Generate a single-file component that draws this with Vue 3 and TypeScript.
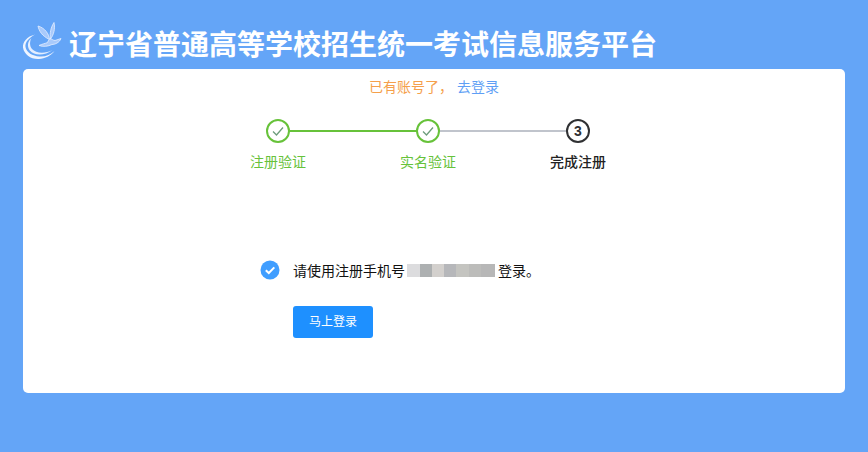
<template>
  <div class="page">
    <header class="header">
      <svg class="logo" width="42" height="40" viewBox="0 0 42 40" fill="none">
        <path d="M14 13.500 C6 15.500 1.500 21 2 26.500 C3 33.500 10 38.500 18 38 C24 37.500 30 35 33.500 30 C29.500 33.500 24.500 36 18.500 35.500 C11.500 35 5.500 31.500 4.500 26 C3.800 21 8 17 14 13.500 Z" fill="#eef4ff" />
        <path d="M10.500 17 C6.500 20.500 5.800 25.500 8.800 29.500 C13 34.500 23 35.500 31.500 29 C24 33 15 32.500 11 28 C8.500 25 8.500 20.500 10.500 17 Z" fill="#e4eeff" />
        <path d="M17 5 C18 10 21 15 28.500 18.500 C28 13 24 7 17 5 Z" fill="#a9cafb" stroke="#e6efff" stroke-width="0.8" />
        <path d="M33 1.500 C30 6 28.500 12 29.500 18 C32.500 14 34.500 8 33 1.500 Z" fill="#a9cafb" stroke="#e6efff" stroke-width="0.8" />
        <path d="M28.500 18 C31 17.500 32 19.500 34 19.500 L40 17.500 C38.500 21.500 34 23.500 31 23.500 C27 25.500 22 26 18 24.500 C21 23 24.500 22.500 26.500 21.500 C27 20.500 27.500 19 28.500 18 Z" fill="#a9cafb" stroke="#e6efff" stroke-width="0.8" />
      </svg>
      <h1 class="title">辽宁省普通高等学校招生统一考试信息服务平台</h1>
    </header>

    <main class="card">
      <div class="loginTip">
        <span class="tipOrange">已有账号了，</span>
        <a class="tipLink">去登录</a>
      </div>

      <div class="steps">
        <div v-for="(s, i) in steps" :key="s.label" class="step" :class="s.state">
          <div v-if="i < steps.length - 1" class="line" :class="{ lineDone: s.lineDone }" />
          <div class="circle">
            <svg v-if="s.state === 'done'" width="14" height="14" viewBox="0 0 14 14" fill="none">
              <path d="M2 7.500 L5.500 11 L12 3.500" stroke="#6d9c7c" stroke-width="1.300" />
            </svg>
            <span v-else>{{ i + 1 }}</span>
          </div>
          <div class="stepLabel">{{ s.label }}</div>
        </div>
      </div>

      <div class="result">
        <div class="resultRow">
          <svg class="okIcon" width="20" height="20" viewBox="0 0 20 20">
            <circle cx="10" cy="10" r="9.500" fill="#409eff" />
            <path d="M5.800 10.200 L8.800 13 L14.300 7.400" fill="none" stroke="#fff" stroke-width="2" />
          </svg>
          <span class="resultText">请使用注册手机号</span>
          <span class="blur">
            <i v-for="(b, i) in blurBlocks" :key="i" :style="{ width: b.w + 'px', background: b.c }" />
          </span>
          <span class="resultText">登录。</span>
        </div>
        <button class="btn">马上登录</button>
      </div>
    </main>
  </div>
</template>

<script setup lang="ts">
const steps = [
  { label: '注册验证', state: 'done', lineDone: true },
  { label: '实名验证', state: 'done', lineDone: false },
  { label: '完成注册', state: 'current', lineDone: false }
]

// 打码的手机号
const blurBlocks = [
  { w: 13, c: '#dcdcde' },
  { w: 12, c: '#adb0b1' },
  { w: 12, c: '#d3d0cd' },
  { w: 12, c: '#b6b7ba' },
  { w: 13, c: '#c4c4c0' },
  { w: 12, c: '#bcbcba' },
  { w: 14, c: '#b7b7b7' }
]
</script>

<style>
html,
body {
  margin: 0;
  background: #64a5f7;
}
</style>

<style scoped>
.page {
  width: 868px;
  height: 452px;
  overflow: hidden;
  background: #64a5f7;
  font-family: "Noto Sans CJK SC", "Liberation Sans", sans-serif;
}

.header {
  height: 69px;
  box-sizing: border-box;
  padding: 21px 0 0 21px;
  display: flex;
  align-items: flex-start;
}

.logo {
  flex: none;
}

.title {
  margin: 2px 0 0 6px;
  font-size: 28px;
  line-height: 40px;
  font-weight: 700;
  color: #fff;
  white-space: nowrap;
}

.card {
  width: 822px;
  height: 324px;
  margin-left: 23px;
  background: #fff;
  border-radius: 5px;
  overflow: hidden;
}

.loginTip {
  height: 36px;
  padding-top: 7px;
  box-sizing: border-box;
  text-align: center;
  font-size: 14px;
  line-height: 20px;
}

.tipOrange {
  color: #f5a04b;
}

.tipLink {
  color: #5f9ff5;
  margin-left: 4px;
}

.steps {
  display: flex;
  width: 450px;
  margin: 14px 0 0 180px;
}

.step {
  position: relative;
  width: 150px;
  display: flex;
  flex-direction: column;
  align-items: center;
}

.line {
  position: absolute;
  left: 75px;
  top: 11px;
  width: 150px;
  height: 2px;
  background: #c0c4cc;
}

.lineDone {
  background: #67c23a;
}

.circle {
  position: relative;
  width: 24px;
  height: 24px;
  box-sizing: border-box;
  border: 2px solid #303133;
  border-radius: 50%;
  background: #fff;
  display: flex;
  align-items: center;
  justify-content: center;
  font-family: "Liberation Sans", sans-serif;
  font-size: 14px;
  font-weight: 700;
  color: #303133;
}

.step.done .circle {
  border-color: #67c23a;
}

.stepLabel {
  margin-top: 10px;
  font-size: 14px;
  line-height: 16px;
  color: #222;
  font-weight: 500;
}

.step.done .stepLabel {
  color: #67c23a;
  font-weight: 400;
}

.result {
  margin: 91px 0 0 237px;
}

.resultRow {
  display: flex;
  align-items: center;
  height: 20px;
  font-size: 14px;
  color: #111;
}

.okIcon {
  margin-right: 13px;
}

.blur {
  display: flex;
  height: 13px;
  margin: 0 3px 0 2px;
}

.blur i {
  display: block;
  height: 100%;
}

.btn {
  display: block;
  width: 80px;
  height: 32px;
  margin: 26px 0 0 33px;
  padding: 0 0 3px;
  border: none;
  border-radius: 3px;
  background: #1e90ff;
  color: #fff;
  font-family: inherit;
  font-size: 12px;
}
</style>
